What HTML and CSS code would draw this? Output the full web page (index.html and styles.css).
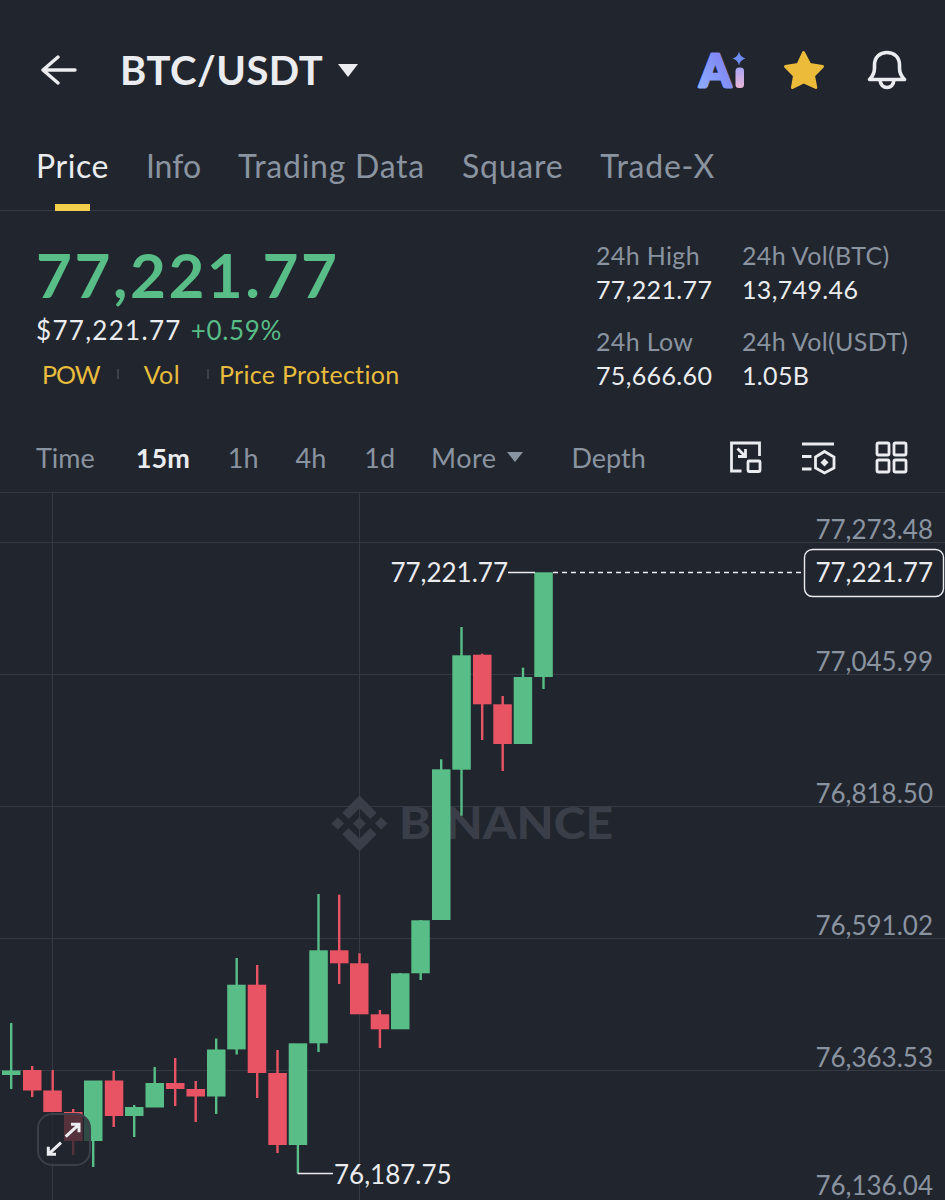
FILE: index.html
```html
<!DOCTYPE html>
<html lang="en">
<head>
    <meta charset="UTF-8">
    <meta name="viewport" content="width=device-width, initial-scale=1.0">
    <title>BTC/USDT</title>
    <link rel="stylesheet" href="styles.css">
</head>
<body>
    <header class="topbar">
        <svg class="back" viewBox="40 55 38 30"><path d="M75 70H43M58 57L43 70l15 13"/></svg>
        <h1 class="pair">BTC/USDT</h1>
        <span class="pair-caret"></span>
        <div class="top-icons">
            <svg class="ai" viewBox="697 38 50 64">
                <defs>
                    <linearGradient id="aiA" x1="0" y1="1" x2="1" y2="0"><stop offset="0" stop-color="#8fb4ff"/><stop offset="1" stop-color="#7b74f0"/></linearGradient>
                    <linearGradient id="aiI" x1="0" y1="0" x2="0" y2="1"><stop offset="0" stop-color="#a9a4f6"/><stop offset="1" stop-color="#eab6d6"/></linearGradient>
                </defs>
                <text class="ai-a" x="699.5" y="87" fill="url(#aiA)" stroke="url(#aiA)">A</text>
                <rect x="735.5" y="67.5" width="8.5" height="20.5" rx="3.5" fill="url(#aiI)"/>
                <path d="M739 51.5Q740 57 745.5 58.5Q740 60 739 65.5Q738 60 732.5 58.5Q738 57 739 51.5Z" fill="#6f8cf5"/>
            </svg>
            <svg class="star" viewBox="782 49 44 42"><polygon points="803.5,52.5 809.7,64.5 822.5,66.5 813.5,75.7 815.8,87.5 803.7,82 792.5,87.5 794.5,75.7 785.5,66.5 798,64.5"/></svg>
            <svg class="bell" viewBox="865 48 42 44">
                <path d="M869.5 79.5C873 76 874.5 73 874.5 68V65C874.5 57 880 52.5 887 52.5S899.5 57 899.5 65V68C899.5 73 901 76 904.5 79.5Z"/>
                <path d="M880 80C880.5 85 883.5 87.5 887 87.5S893.5 85 894 80"/>
            </svg>
        </div>
    </header>

    <nav class="tabs">
        <a class="tab active">Price</a>
        <a class="tab tab-info">Info</a>
        <a class="tab">Trading Data</a>
        <a class="tab">Square</a>
        <a class="tab">Trade-X</a>
    </nav>

    <section class="summary">
        <div class="quote">
            <div class="last-price">77,221.77</div>
            <div class="fiat">$77,221.77 <span class="change">+0.59%</span></div>
            <div class="tags">
                <span class="tag tag-pow">POW</span><i class="tag-sep"></i>
                <span class="tag tag-vol">Vol</span><i class="tag-sep"></i>
                <span class="tag tag-pp">Price Protection</span>
            </div>
        </div>
        <div class="stats">
            <div class="stat"><span>24h High</span><b>77,221.77</b></div>
            <div class="stat"><span>24h Vol(BTC)</span><b>13,749.46</b></div>
            <div class="stat"><span>24h Low</span><b>75,666.60</b></div>
            <div class="stat"><span>24h Vol(USDT)</span><b>1.05B</b></div>
        </div>
    </section>

    <div class="toolbar">
        <a class="range r-time">Time</a>
        <a class="range r-15m">15m</a>
        <a class="range r-1h">1h</a>
        <a class="range r-4h">4h</a>
        <a class="range r-1d">1d</a>
        <a class="range r-more">More</a><span class="more-caret"></span>
        <a class="range r-depth">Depth</a>
        <div class="tool-icons">
            <svg viewBox="728 441 35 35"><path d="M741.5 472H731.5V444H759.5V457"/><rect x="748" y="462" width="12" height="10.5" rx="1"/><path d="M737.5 449.5L745 457M745.5 450V457.5H738"/></svg>
            <svg class="tool-wide" viewBox="800 441 37 35"><path d="M802 445H834M802 457.5H811.5M802 470H811.5"/><path d="M824.5 452.5L834 458V469L824.5 474L815.5 469V458Z"/><path class="fill" d="M824.5 459.5L828.5 463.5L824.5 467.5L820.5 463.5Z"/></svg>
            <svg viewBox="874 441 35 35"><rect x="877" y="444" width="12" height="12" rx="1.5"/><rect x="894" y="444" width="12" height="12" rx="1.5"/><rect x="877" y="461" width="12" height="12" rx="1.5"/><rect x="894" y="461" width="12" height="12" rx="1.5"/></svg>
        </div>
    </div>

    <div class="chart">
        <svg class="chart-svg" viewBox="0 493 945 707">
            <g class="grid">
                <path d="M0 542.5H945M0 674.5H945M0 806.5H945M0 938.5H945M0 1070.5H945M52.5 493V1200M359.5 493V1200"/>
            </g>

            <g class="mark">
                <path transform="translate(331.5 795.5) scale(.442)" d="M38.73 53.2l24.59-24.58 24.6 24.6 14.3-14.31L63.32 0 24.42 38.9zM0 63.31l14.3-14.31 14.31 14.31-14.31 14.3zM38.73 73.41l24.59 24.59 24.6-24.6 14.31 14.29-38.9 38.91-38.91-38.88-.02-.02zM98 63.31l14.3-14.31 14.31 14.3-14.31 14.32zM77.83 63.3L63.32 48.78 52.59 59.51l-1.24 1.23-2.54 2.54 14.51 14.5 14.51-14.47z"/>
                <text x="399" y="839" textLength="214" lengthAdjust="spacingAndGlyphs">BINANCE</text>
            </g>

            <g class="up">
                <rect x="10" y="1023" width="2.4" height="66"/><rect x="2" y="1070.5" width="18.5" height="4.5"/>
                <rect x="92" y="1141" width="2.4" height="26"/><rect x="84" y="1080.5" width="18.5" height="60.5"/>
                <rect x="133" y="1105" width="2.4" height="32"/><rect x="125" y="1107" width="18.5" height="9"/>
                <rect x="153.5" y="1067" width="2.4" height="20"/><rect x="145.5" y="1083" width="18.5" height="24.5"/>
                <rect x="215" y="1038.5" width="2.4" height="75.5"/><rect x="207" y="1049.5" width="18.5" height="47"/>
                <rect x="235.5" y="958" width="2.4" height="96.5"/><rect x="227.2" y="984.7" width="18.5" height="64.7"/>
                <rect x="296.7" y="1145" width="2.4" height="28"/><rect x="288.7" y="1043.3" width="18.5" height="101.7"/>
                <rect x="317.3" y="894" width="2.4" height="158"/><rect x="309.3" y="950.3" width="18.5" height="93"/>
                <rect x="399" y="973" width="2.4" height="56"/><rect x="391" y="973.3" width="18.5" height="56"/>
                <rect x="419.5" y="920" width="2.4" height="60"/><rect x="411.3" y="920.3" width="18.5" height="53"/>
                <rect x="440" y="759.3" width="2.4" height="20"/><rect x="432" y="769.3" width="18.5" height="150.7"/>
                <rect x="460.3" y="627" width="2.4" height="188.7"/><rect x="452.3" y="655.3" width="18.5" height="114.4"/>
                <rect x="521.8" y="667.7" width="2.4" height="20"/><rect x="513.7" y="677" width="18.5" height="67"/>
                <rect x="542.3" y="660" width="2.4" height="29"/><rect x="534.3" y="572.3" width="18.5" height="104.7"/>
            </g>
            <g class="down">
                <rect x="31" y="1066" width="2.4" height="31"/><rect x="23" y="1070" width="18.5" height="20.5"/>
                <rect x="51.5" y="1070" width="2.4" height="30"/><rect x="43.3" y="1090.5" width="18.5" height="21.5"/>
                <rect x="72" y="1109" width="2.4" height="46"/><rect x="64" y="1112" width="18.5" height="29"/>
                <rect x="112.5" y="1071" width="2.4" height="56"/><rect x="104.8" y="1080.5" width="18.5" height="35.5"/>
                <rect x="174" y="1058" width="2.4" height="48"/><rect x="166" y="1083" width="18.5" height="6"/>
                <rect x="194.5" y="1081" width="2.4" height="41"/><rect x="186.5" y="1089" width="18.5" height="7.5"/>
                <rect x="256" y="965" width="2.4" height="133"/><rect x="247.7" y="984.7" width="18.5" height="88.3"/>
                <rect x="276.3" y="1050" width="2.4" height="103"/><rect x="268.3" y="1073" width="18.5" height="72"/>
                <rect x="338" y="894.7" width="2.4" height="89.3"/><rect x="330" y="950.3" width="18.5" height="13"/>
                <rect x="358.3" y="953.3" width="2.4" height="20"/><rect x="350" y="963.3" width="18.5" height="51"/>
                <rect x="378.7" y="1010" width="2.4" height="38"/><rect x="370.7" y="1014.3" width="18.5" height="15"/>
                <rect x="481" y="653.7" width="2.4" height="86.3"/><rect x="473" y="654.7" width="18.5" height="49.6"/>
                <rect x="501.5" y="696" width="2.4" height="75"/><rect x="493.3" y="704.3" width="18.5" height="39.7"/>
            </g>

            <g class="leaders">
                <path d="M508 572.5H535M297.5 1173.5H333"/>
                <path class="dashed" d="M553 572.5H804"/>
            </g>

            <text class="hl" x="508" y="582" text-anchor="end">77,221.77</text>
            <text class="hl" x="334" y="1184">76,187.75</text>

            <g class="axis">
                <text x="933" y="539">77,273.48</text>
                <text x="933" y="671">77,045.99</text>
                <text x="933" y="803">76,818.50</text>
                <text x="933" y="935">76,591.02</text>
                <text x="933" y="1067">76,363.53</text>
                <text x="933" y="1195">76,136.04</text>
            </g>

            <rect class="badge" x="804.5" y="549.5" width="139" height="47" rx="8"/>
            <text class="hl" x="933" y="582" text-anchor="end">77,221.77</text>
        </svg>
        <button class="expand">
            <svg viewBox="0 0 50 49"><path d="M26.7 21.7L40 9.3M32 9.3H40V17.3"/><path d="M22 27.7L9.3 39.3M9.3 31.7V39.3H17"/></svg>
        </button>
    </div>
</body>
</html>
```

FILE: styles.css
```css
* {
    box-sizing: border-box;
}
html, body {
    margin: 0;
    padding: 0;
}
body {
    width: 945px;
    height: 1200px;
    overflow: hidden;
    background-color: #21252d;
    color: #eaecef;
    font-family: Lato, "Liberation Sans", sans-serif;
}

/* top bar */
.topbar {
    display: flex;
    align-items: center;
    height: 140px;
    padding: 0 38px 0 40px;
}
.back {
    width: 38px;
    height: 30px;
    margin-right: 42px;
    fill: none;
    stroke: #eaecef;
    stroke-width: 3.4;
    stroke-linecap: round;
    stroke-linejoin: round;
}
.pair {
    margin: 0;
    font-size: 40px;
    font-weight: 700;
    line-height: 48px;
    letter-spacing: 0.5px;
}
.pair-caret {
    width: 0;
    height: 0;
    margin: 0 0 0 15px;
    border-left: 10px solid transparent;
    border-right: 10px solid transparent;
    border-top: 13px solid #eaecef;
}
.top-icons {
    display: flex;
    align-items: center;
    margin-left: auto;
}
.ai {
    width: 50px;
    height: 64px;
}
.ai-a {
    font-size: 45px;
    font-weight: 900;
    stroke-width: 3;
    stroke-linejoin: round;
}
.star {
    width: 44px;
    height: 42px;
    margin-left: 35px;
}
.star polygon {
    fill: #edbb3a;
    stroke: #edbb3a;
    stroke-width: 3;
    stroke-linejoin: round;
}
.bell {
    width: 42px;
    height: 44px;
    margin-left: 39px;
    fill: none;
    stroke: #eaecef;
    stroke-width: 3.6;
    stroke-linecap: round;
    stroke-linejoin: round;
}

/* tabs */
.tabs {
    display: flex;
    gap: 37px;
    height: 71px;
    padding-left: 36px;
    border-bottom: 1px solid #343944;
}
.tab {
    position: relative;
    color: #8a93a0;
    font-size: 32px;
    line-height: 52px;
    letter-spacing: 0.75px;
}
.tab.active {
    color: #eaecef;
    letter-spacing: 0.55px;
}
.tab-info {
    letter-spacing: 0;
}
.tab.active::after {
    content: "";
    position: absolute;
    left: 19px;
    bottom: -1px;
    width: 35px;
    height: 7px;
    background-color: #f3cf4c;
}

/* price summary */
.summary {
    display: flex;
    justify-content: space-between;
    height: 211px;
    padding: 0 36px;
}
.last-price {
    margin-top: 24px;
    color: #58bd87;
    font-size: 62px;
    font-weight: 700;
    line-height: 78px;
    letter-spacing: 2.5px;
}
.fiat {
    font-size: 26px;
    line-height: 34px;
    letter-spacing: 1.3px;
}
.change {
    margin-left: 1px;
    color: #58bd87;
    letter-spacing: 0.7px;
}
.tags {
    display: flex;
    align-items: center;
    margin-top: 10px;
    padding-left: 6px;
    color: #e8bc3c;
    font-size: 25px;
    line-height: 34px;
}
.tag-sep {
    width: 2px;
    height: 10px;
    background-color: #3c404a;
}
.tag-pow {
    margin-right: 17px;
    letter-spacing: -1px;
}
.tag-vol {
    margin: 0 27px 0 25px;
    letter-spacing: 0.4px;
}
.tag-vol + .tag-sep {
    margin-right: 10px;
}
.tag-pp {
    letter-spacing: 0.3px;
}
.stats {
    display: grid;
    grid-template-columns: 146px 167px;
    grid-auto-rows: 86px;
    padding-top: 27px;
}
.stat span, .stat b {
    display: block;
    font-size: 25px;
    font-weight: 400;
    line-height: 34px;
    letter-spacing: 0.35px;
}
.stat span {
    color: #8a93a0;
}

/* interval row */
.toolbar {
    display: flex;
    align-items: center;
    height: 71px;
    padding-left: 36px;
    border-bottom: 1px solid #343944;
    color: #8a93a0;
    font-size: 27px;
}
.r-15m {
    margin-left: 41px;
    color: #eaecef;
    font-weight: 700;
}
.r-1h {
    margin-left: 38px;
}
.r-4h {
    margin-left: 37px;
}
.r-1d {
    margin-left: 38px;
}
.r-more {
    margin-left: 36px;
    letter-spacing: 0.5px;
}
.more-caret {
    width: 0;
    height: 0;
    margin-left: 10px;
    border-left: 8px solid transparent;
    border-right: 8px solid transparent;
    border-top: 10px solid #8a93a0;
}
.r-depth {
    margin-left: 49px;
}
.tool-icons {
    display: flex;
    gap: 37px;
    margin-left: auto;
    margin-right: 36px;
}
.tool-icons svg {
    width: 35px;
    height: 35px;
    fill: none;
    stroke: #eaecef;
    stroke-width: 2.8;
}
.tool-icons .tool-wide {
    width: 37px;
}
.tool-icons .fill {
    fill: #eaecef;
    stroke: none;
}

/* chart */
.chart {
    position: relative;
    height: 707px;
}
.chart-svg {
    display: block;
    width: 945px;
    height: 707px;
}
.grid path {
    fill: none;
    stroke: #343944;
    stroke-width: 1;
}
.mark {
    fill: #3a3e48;
}
.mark text {
    font-size: 43px;
    font-weight: 900;
}
.up {
    fill: #58bd87;
}
.down {
    fill: #e95464;
}
.leaders path {
    fill: none;
    stroke: #eaecef;
    stroke-width: 1.4;
}
.leaders .dashed {
    stroke-dasharray: 5 4;
}
.hl {
    fill: #eaecef;
    font-size: 26px;
}
.axis text {
    fill: #8a93a0;
    font-size: 26px;
    text-anchor: end;
}
.badge {
    fill: #21252d;
    stroke: #eaecef;
    stroke-width: 1.4;
}
.expand {
    position: absolute;
    left: 37px;
    top: 620px;
    width: 54px;
    height: 53px;
    padding: 0;
    border: 2px solid #3a3f4a;
    border-radius: 15px;
    background-color: rgba(33, 37, 45, 0.75);
}
.expand svg {
    display: block;
    width: 50px;
    height: 49px;
    fill: none;
    stroke: #eaecef;
    stroke-width: 3;
}
```
